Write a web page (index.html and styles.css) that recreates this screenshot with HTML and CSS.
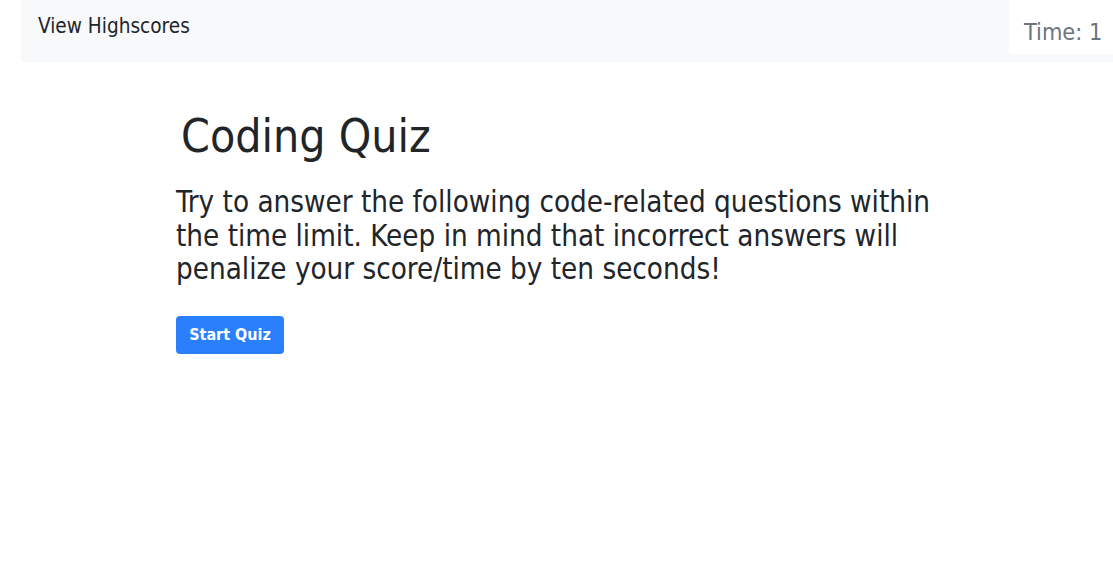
FILE: index.html
```html
<!DOCTYPE html>
<html lang="en">
<head>
<meta charset="utf-8">
<title>Coding Quiz</title>
<link rel="stylesheet" href="styles.css">
</head>
<body>
<nav class="topbar">
  <a class="highscores" href="#">View Highscores</a>
  <div class="timer">Time: 1</div>
</nav>
<main class="intro">
  <h1 class="title">Coding Quiz</h1>
  <p class="lead">Try to answer the following code-related questions within the time limit. Keep in mind that incorrect answers will penalize your score/time by ten seconds!</p>
  <button class="start-btn" type="button">Start Quiz</button>
</main>
</body>
</html>
```

FILE: styles.css
```css
html, body {
  margin: 0;
  padding: 0;
  background: #ffffff;
}

body {
  font-family: "Comic Sans MS", "DejaVu Sans Condensed", "DejaVu Sans", sans-serif;
  color: #212529;
}

.topbar {
  margin-left: 21px;
  height: 62px;
  background: #f8f9fa;
  display: flex;
  justify-content: space-between;
  align-items: flex-start;
}

.highscores {
  padding: 11px 0 0 17px;
  font-size: 20.6px;
  line-height: 30px;
  color: #212529;
  text-decoration: none;
}

.timer {
  width: 104px;
  height: 54px;
  box-sizing: border-box;
  background: #ffffff;
  padding: 17px 0 0 15px;
  font-size: 23.3px;
  line-height: 30px;
  color: #6c757d;
}

.intro {
  margin-left: 176px;
  width: 790px;
}

.title {
  margin: 47px 0 0 5px;
  font-size: 46px;
  line-height: 54px;
  font-weight: 400;
}

.lead {
  margin: 23px 0 0 0;
  font-size: 29.3px;
  line-height: 33.6px;
}

.start-btn {
  margin-top: 29px;
  width: 108px;
  height: 38px;
  padding: 0;
  border: none;
  border-radius: 4px;
  background: #297ffc;
  color: #ffffff;
  font-family: inherit;
  font-size: 16px;
  font-weight: 700;
  cursor: pointer;
}
```
